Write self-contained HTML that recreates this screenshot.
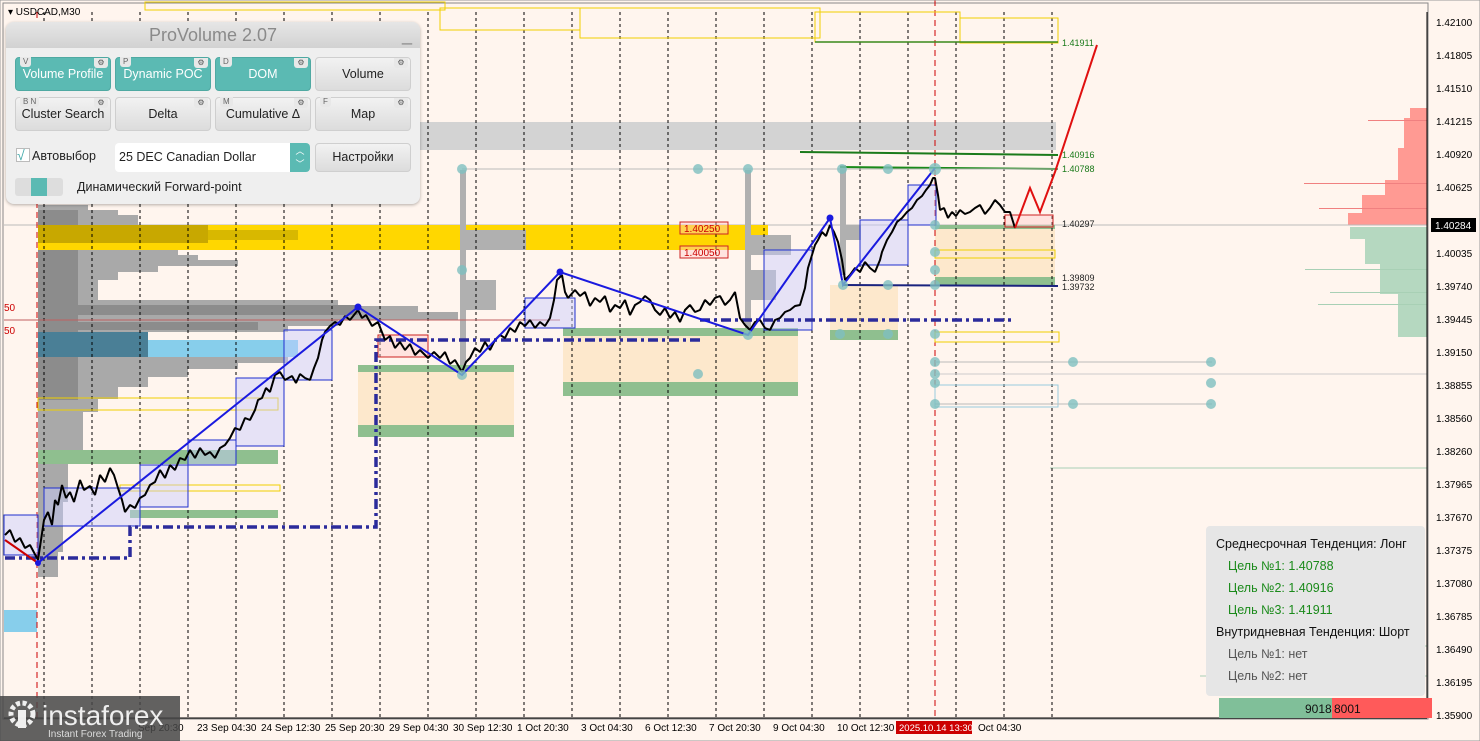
<!DOCTYPE html>
<html><head><meta charset="utf-8"><style>
*{margin:0;padding:0;box-sizing:border-box}
body{width:1480px;height:741px;overflow:hidden;background:#fff5ee;font-family:"Liberation Sans",sans-serif;position:relative}
svg{position:absolute;left:0;top:0}
.ax{font-size:10px;fill:#000}
.panel{position:absolute;left:6px;top:22px;width:414px;height:182px;background:#efefef;border-radius:8px;box-shadow:0 1px 3px rgba(0,0,0,.3)}
.ptitle{height:26px;border-radius:8px 8px 0 0;background:linear-gradient(#e6e6e6,#d2d2d2);text-align:center;color:#8a8a8a;font-size:18px;line-height:26px}
.btn{position:absolute;width:96px;height:34px;border-radius:4px;background:linear-gradient(#f2f2f2,#dcdcdc);border:1px solid #cfcfcf;font-size:12.5px;text-align:center;line-height:32px;color:#222}
.btn.on{background:#5bbab3;color:#fff;border-color:#4fa9a2}
.btn small{position:absolute;top:-1px;left:4px;font-size:8px;line-height:10px;color:#666;background:#e8e8e8;padding:0 3px;border-radius:0 0 3px 3px}
.btn i{position:absolute;top:0;right:2px;width:14px;height:10px;background:#e8e8e8;border-radius:0 0 3px 3px;font-size:8px;line-height:10px;font-style:normal;color:#555}
.info{position:absolute;left:1206px;top:526px;width:219px;height:170px;background:#e6e6e6;border-radius:4px;font-size:12.5px;color:#111}
.info div{position:absolute;left:10px}
.g{color:#1a8a1a}
.gr{color:#555}
</style></head><body>
<svg width="1480" height="741" viewBox="0 0 1480 741">
<rect x="0" y="0" width="1480" height="741" fill="#fff5ee"/>
<rect x="3" y="3" width="1425" height="716" fill="none" stroke="#888" stroke-width="1"/>
<!-- right profile -->
<g fill="#ff9a93">
<rect x="1410" y="108" width="17" height="10"/><rect x="1404" y="118" width="23" height="30"/><rect x="1398" y="148" width="29" height="32"/><rect x="1385" y="180" width="42" height="15"/><rect x="1362" y="195" width="65" height="18"/><rect x="1348" y="213" width="79" height="12"/>
</g>
<g fill="#f08080"><rect x="1368" y="120" width="59" height="1"/><rect x="1304" y="183" width="123" height="1"/><rect x="1319" y="208" width="108" height="1"/></g>
<g fill="#b5d8c0">
<rect x="1350" y="227" width="77" height="12"/><rect x="1365" y="239" width="62" height="25"/><rect x="1380" y="264" width="47" height="30"/><rect x="1398" y="294" width="29" height="43"/>
</g>
<g fill="#a8d0b5"><rect x="1305" y="269" width="122" height="1"/><rect x="1330" y="292" width="97" height="1"/><rect x="1318" y="304" width="109" height="1"/></g>
<line x1="4" y1="225" x2="1427" y2="225" stroke="#bbb"/>
<line x1="1050" y1="468" x2="1427" y2="468" stroke="#a8d0b5"/><line x1="1280" y1="646" x2="1427" y2="646" stroke="#a8d0b5"/><line x1="1200" y1="676" x2="1427" y2="676" stroke="#a8d0b5"/>
<!-- top gray band -->
<rect x="420" y="122" width="636" height="28" fill="#d3d3d3"/>
<!-- left volume profile -->
<g fill="#a9a9a9">
<rect x="38" y="205" width="50" height="5"/><rect x="38" y="210" width="80" height="5"/><rect x="38" y="215" width="100" height="10"/>
<rect x="38" y="250" width="140" height="5"/><rect x="38" y="255" width="160" height="5"/><rect x="38" y="260" width="200" height="6"/><rect x="38" y="266" width="120" height="6"/><rect x="38" y="272" width="80" height="8"/><rect x="38" y="280" width="60" height="20"/>
<rect x="38" y="300" width="300" height="6"/><rect x="38" y="306" width="380" height="6"/><rect x="38" y="312" width="420" height="8"/><rect x="38" y="320" width="300" height="6"/><rect x="38" y="326" width="250" height="6"/>
<rect x="38" y="357" width="250" height="6"/><rect x="38" y="363" width="200" height="6"/><rect x="38" y="369" width="150" height="8"/><rect x="38" y="377" width="110" height="10"/><rect x="38" y="387" width="80" height="12"/><rect x="38" y="399" width="60" height="13"/><rect x="38" y="412" width="45" height="40"/><rect x="38" y="452" width="30" height="50"/><rect x="38" y="502" width="25" height="50"/><rect x="38" y="552" width="20" height="25"/>
</g>
<g fill="#8c8c8c"><rect x="38" y="305" width="320" height="10"/><rect x="38" y="322" width="220" height="8"/><rect x="38" y="210" width="40" height="190"/></g>
<rect x="38" y="225" width="730" height="25" fill="#ffd700"/>
<rect x="38" y="225" width="170" height="18" fill="#c8a800"/>
<rect x="208" y="230" width="90" height="10" fill="#d8b800"/>
<rect x="38" y="332" width="110" height="25" fill="#4a7f96"/>
<rect x="148" y="340" width="150" height="17" fill="#87ceeb"/>
<rect x="4" y="610" width="33" height="22" fill="#87ceeb"/>
<!-- small profiles -->
<g fill="#b0b0b0"><rect x="460" y="170" width="6" height="200"/><rect x="466" y="230" width="60" height="20"/><rect x="466" y="280" width="30" height="30"/><rect x="745" y="170" width="6" height="160"/><rect x="751" y="235" width="40" height="20"/><rect x="751" y="270" width="25" height="30"/><rect x="840" y="165" width="6" height="110"/><rect x="846" y="225" width="15" height="15"/></g>
<!-- zones -->
<rect x="358" y="368" width="156" height="68" fill="#fde8cc"/><rect x="358" y="365" width="156" height="7" fill="#8fbf8f"/><rect x="358" y="425" width="156" height="12" fill="#8fbf8f"/>
<rect x="563" y="335" width="235" height="60" fill="#fde8cc"/><rect x="563" y="328" width="235" height="8" fill="#8fbf8f"/><rect x="563" y="382" width="235" height="14" fill="#8fbf8f"/>
<rect x="830" y="285" width="68" height="55" fill="#fde8cc"/><rect x="830" y="330" width="68" height="10" fill="#8fbf8f"/>
<rect x="935" y="228" width="120" height="52" fill="#fde8cc"/><rect x="935" y="225" width="120" height="4" fill="#8fbf8f"/><rect x="935" y="277" width="120" height="8" fill="#8fbf8f"/>
<rect x="38" y="450" width="240" height="14" fill="#8fbf8f"/><rect x="130" y="510" width="148" height="8" fill="#8fbf8f"/>
<!-- vertical dotted lines -->
<g stroke="#000" stroke-dasharray="3,3" stroke-width="1">
<line x1="44" y1="12" x2="44" y2="718"/><line x1="92" y1="12" x2="92" y2="718"/><line x1="140" y1="12" x2="140" y2="718"/><line x1="188" y1="12" x2="188" y2="718"/><line x1="236" y1="12" x2="236" y2="718"/><line x1="284" y1="12" x2="284" y2="718"/><line x1="332" y1="12" x2="332" y2="718"/><line x1="380" y1="12" x2="380" y2="718"/><line x1="428" y1="12" x2="428" y2="718"/><line x1="476" y1="12" x2="476" y2="718"/><line x1="524" y1="12" x2="524" y2="718"/><line x1="572" y1="12" x2="572" y2="718"/><line x1="620" y1="12" x2="620" y2="718"/><line x1="668" y1="12" x2="668" y2="718"/><line x1="716" y1="12" x2="716" y2="718"/><line x1="764" y1="12" x2="764" y2="718"/><line x1="812" y1="12" x2="812" y2="718"/><line x1="860" y1="12" x2="860" y2="718"/><line x1="908" y1="12" x2="908" y2="718"/><line x1="956" y1="12" x2="956" y2="718"/><line x1="1004" y1="12" x2="1004" y2="718"/><line x1="1052" y1="12" x2="1052" y2="718"/>
</g>
<line x1="37" y1="12" x2="37" y2="718" stroke="#c00" stroke-dasharray="6,4"/>
<line x1="935" y1="0" x2="935" y2="718" stroke="#c00" stroke-dasharray="6,4"/>
<!-- yellow boxes top -->
<g fill="none" stroke="#f0d000"><rect x="145" y="2" width="300" height="8"/><rect x="440" y="8" width="140" height="22"/><rect x="580" y="8" width="240" height="30"/><rect x="815" y="12" width="145" height="30"/><rect x="960" y="18" width="98" height="25"/><rect x="38" y="398" width="240" height="12"/><rect x="120" y="485" width="160" height="6"/><rect x="935" y="250" width="120" height="8"/><rect x="935" y="332" width="124" height="10"/></g>
<g fill="none" stroke="#99ccdd"><rect x="935" y="385" width="123" height="22"/></g>
<line x1="935" y1="362" x2="1212" y2="362" stroke="#bbb"/><line x1="935" y1="374" x2="1427" y2="374" stroke="#ccc"/><line x1="935" y1="404" x2="1212" y2="404" stroke="#bbb"/>
<!-- target lines -->
<line x1="815" y1="42" x2="1058" y2="42" stroke="#3a8a1a" stroke-width="1.5"/>
<line x1="800" y1="152" x2="1058" y2="155" stroke="#1a7a1a" stroke-width="2"/>
<line x1="840" y1="167" x2="1058" y2="169" stroke="#1a8a1a" stroke-width="2"/>
<line x1="843" y1="285" x2="1058" y2="286" stroke="#1a237e" stroke-width="2"/>
<line x1="462" y1="169" x2="1058" y2="169" stroke="#bbb"/>
<line x1="4" y1="320" x2="560" y2="320" stroke="#c06060"/>
<!-- blue boxes -->
<g fill="rgba(200,205,255,.45)" stroke="#1f2fcf" stroke-width="1">
<rect x="44" y="488" width="96" height="38"/><rect x="140" y="465" width="48" height="42"/><rect x="188" y="440" width="48" height="25"/><rect x="236" y="378" width="48" height="68"/><rect x="284" y="330" width="48" height="50"/><rect x="525" y="298" width="50" height="30"/><rect x="764" y="250" width="48" height="80"/><rect x="860" y="220" width="48" height="45"/><rect x="908" y="185" width="28" height="40"/><rect x="4" y="515" width="34" height="40"/>
</g>
<g fill="rgba(255,200,200,.4)" stroke="#c22"><rect x="378" y="335" width="50" height="22"/><rect x="680" y="222" width="48" height="12"/><rect x="680" y="246" width="48" height="12"/><rect x="1005" y="215" width="48" height="12"/></g>
<g font-size="10" fill="#c00"><text x="684" y="232">1.40250</text><text x="684" y="256">1.40050</text><text x="4" y="311">50</text><text x="4" y="334">50</text></g>
<!-- dash-dot -->
<polyline points="5,558 130,558 130,527 376,527 376,340 700,340" fill="none" stroke="#2b2b9b" stroke-width="3.5" stroke-dasharray="10,4,3,4"/>
<polyline points="700,320 1015,320" fill="none" stroke="#2b2b9b" stroke-width="3.5" stroke-dasharray="10,4,3,4"/>
<!-- price -->
<polyline fill="none" stroke="#000" stroke-width="2" stroke-linejoin="bevel" points="5,535 10,530 15,542 20,538 25,548 30,545 38,560 41,540 44,520 48,512 52,525 55,500 58,505 62,485 66,498 70,492 74,502 80,480 84,490 90,486 95,495 100,475 105,482 110,468 114,475 118,488 122,500 125,512 130,505 135,508 140,498 145,495 150,485 155,482 160,470 165,478 170,465 175,470 180,458 185,460 190,450 195,458 200,448 205,455 210,452 215,458 220,448 225,445 230,438 235,428 240,430 245,418 250,420 255,410 258,400 262,398 266,388 270,392 275,375 280,372 285,380 292,376 296,383 300,374 305,378 310,380 314,368 318,358 322,340 325,332 330,326 335,322 340,325 345,316 350,320 358,310 362,318 366,315 372,326 378,322 385,340 390,336 395,348 400,342 405,350 410,344 415,355 420,350 428,358 434,352 440,358 445,352 450,364 455,360 462,372 466,362 470,358 475,348 480,352 485,342 490,350 495,340 500,335 505,338 510,328 515,332 520,322 525,326 530,320 535,328 540,322 545,326 550,318 554,300 557,280 562,275 565,292 568,298 575,290 580,296 585,292 590,306 595,298 600,302 605,296 610,312 615,305 620,308 625,300 630,315 635,305 640,302 645,296 650,300 655,310 660,315 665,308 670,318 675,312 680,322 685,310 690,305 695,312 700,310 705,300 710,305 715,298 720,296 725,305 730,300 735,292 740,318 745,325 750,330 755,322 760,320 765,328 770,330 775,320 780,318 785,312 790,310 795,306 800,305 805,288 808,268 812,255 815,245 818,240 822,232 826,236 830,225 834,232 838,242 842,260 845,280 850,275 855,268 860,272 865,262 870,268 875,272 880,260 882,252 887,240 892,232 897,222 902,218 907,212 912,208 917,200 922,196 926,190 930,185 933,178 935,178 938,195 940,210 944,208 948,218 952,212 956,216 960,210 965,214 970,212 975,208 980,205 985,214 990,208 995,200 1000,205 1005,212 1010,212 1015,228"/>
<polyline points="1015,228 1030,188 1040,212 1055,172 1097,45" fill="none" stroke="#e01010" stroke-width="2"/>
<line x1="5" y1="540" x2="38" y2="563" stroke="#c00" stroke-width="2"/>
<!-- zigzag -->
<polyline points="38,563 358,307 462,375 560,272 748,335 830,218 843,285 935,168" fill="none" stroke="#1a1adf" stroke-width="2"/>
<g fill="#1a1adf"><circle cx="358" cy="307" r="3.5"/><circle cx="560" cy="272" r="3.5"/><circle cx="830" cy="218" r="3.5"/><circle cx="38" cy="563" r="3"/></g>
<!-- teal circles -->
<g fill="#7fc0c0" opacity=".8">
<circle cx="462" cy="169" r="5"/><circle cx="698" cy="169" r="5"/><circle cx="748" cy="169" r="5"/><circle cx="842" cy="169" r="5"/><circle cx="888" cy="169" r="5"/><circle cx="935" cy="169" r="6"/>
<circle cx="462" cy="270" r="5"/><circle cx="462" cy="375" r="5"/><circle cx="748" cy="335" r="5"/><circle cx="698" cy="374" r="5"/><circle cx="843" cy="285" r="5"/><circle cx="888" cy="285" r="5"/><circle cx="935" cy="225" r="5"/><circle cx="935" cy="252" r="5"/><circle cx="935" cy="270" r="5"/><circle cx="935" cy="285" r="5"/><circle cx="840" cy="334" r="5"/><circle cx="888" cy="334" r="5"/><circle cx="935" cy="334" r="5"/><circle cx="935" cy="362" r="5"/><circle cx="935" cy="374" r="5"/><circle cx="935" cy="383" r="5"/><circle cx="935" cy="404" r="5"/><circle cx="1073" cy="362" r="5"/><circle cx="1073" cy="404" r="5"/><circle cx="1211" cy="362" r="5"/><circle cx="1211" cy="383" r="5"/><circle cx="1211" cy="404" r="5"/>
</g>
<g font-size="9" fill="#1a7a1a"><text x="1062" y="46">1.41911</text><text x="1062" y="158">1.40916</text><text x="1062" y="172">1.40788</text></g>
<g font-size="9" fill="#222"><text x="1062" y="227">1.40297</text><text x="1062" y="281">1.39809</text><text x="1062" y="290">1.39732</text></g>
<!-- axis -->
<line x1="1427" y1="12" x2="1427" y2="718" stroke="#000"/>
<line x1="4" y1="718" x2="1427" y2="718" stroke="#000"/>
<g class="ax">
<text x="1436" y="26">1.42100</text><text x="1436" y="59">1.41805</text><text x="1436" y="92">1.41510</text><text x="1436" y="125">1.41215</text><text x="1436" y="158">1.40920</text><text x="1436" y="191">1.40625</text><text x="1436" y="257">1.40035</text><text x="1436" y="290">1.39740</text><text x="1436" y="323">1.39445</text><text x="1436" y="356">1.39150</text><text x="1436" y="389">1.38855</text><text x="1436" y="422">1.38560</text><text x="1436" y="455">1.38260</text><text x="1436" y="488">1.37965</text><text x="1436" y="521">1.37670</text><text x="1436" y="554">1.37375</text><text x="1436" y="587">1.37080</text><text x="1436" y="620">1.36785</text><text x="1436" y="653">1.36490</text><text x="1436" y="686">1.36195</text><text x="1436" y="719">1.35900</text>
</g>
<rect x="1431" y="218" width="45" height="14" fill="#000"/><text x="1435" y="229" font-size="10" fill="#fff">1.40284</text>
<g class="ax">
<text x="197" y="731">23 Sep 04:30</text><text x="261" y="731">24 Sep 12:30</text><text x="325" y="731">25 Sep 20:30</text><text x="389" y="731">29 Sep 04:30</text><text x="453" y="731">30 Sep 12:30</text><text x="517" y="731">1 Oct 20:30</text><text x="581" y="731">3 Oct 04:30</text><text x="645" y="731">6 Oct 12:30</text><text x="709" y="731">7 Oct 20:30</text><text x="773" y="731">9 Oct 04:30</text><text x="837" y="731">10 Oct 12:30</text><text x="978" y="731">Oct 04:30</text><text x="138" y="731">Sep 20:30</text>
</g>
<rect x="896" y="721" width="76" height="13" fill="#c00"/><text x="899" y="731" font-size="9.5" fill="#fff">2025.10.14 13:30</text>
<rect x="0" y="0" width="1480" height="741" fill="none" stroke="#999"/>
<!-- right info bar -->
<rect x="1219" y="698" width="113" height="20" fill="#80bf99"/><rect x="1332" y="698" width="100" height="20" fill="#ff5a5a"/>
<text x="1305" y="713" font-size="12" fill="#111">9018</text><text x="1334" y="713" font-size="12" fill="#111">8001</text>
<!-- logo -->
<rect x="0" y="696" width="180" height="45" fill="rgba(70,70,70,.85)"/>
<g fill="#fff" opacity=".9"><circle cx="22" cy="714" r="11" fill="none" stroke="#fff" stroke-width="5" stroke-dasharray="4,2.5"/><rect x="18" y="710" width="8" height="18"/></g>
<text x="42" y="725" font-size="28" fill="#eee">instaforex</text>
<text x="48" y="737" font-size="10" fill="#ddd">Instant Forex Trading</text>
<!-- symbol -->
<text x="8" y="15" font-size="10">▾ USDCAD,M30</text>
</svg>
<div class="panel">
<div class="ptitle">ProVolume 2.07<span style="position:absolute;right:8px;top:0;color:#888">_</span></div>
<div class="btn on" style="left:9px;top:35px"><small>V</small><i>⚙</i>Volume Profile</div>
<div class="btn on" style="left:109px;top:35px"><small>P</small><i>⚙</i>Dynamic POC</div>
<div class="btn on" style="left:209px;top:35px"><small>D</small><i>⚙</i>DOM</div>
<div class="btn" style="left:309px;top:35px"><i>⚙</i>Volume</div>
<div class="btn" style="left:9px;top:75px"><small>B N</small><i>⚙</i>Cluster Search</div>
<div class="btn" style="left:109px;top:75px"><i>⚙</i>Delta</div>
<div class="btn" style="left:209px;top:75px"><small>M</small><i>⚙</i>Cumulative Δ</div>
<div class="btn" style="left:309px;top:75px"><small>F</small><i>⚙</i>Map</div>
<div style="position:absolute;left:10px;top:126px;width:14px;height:14px;background:#fff;border:1px solid #bbb;color:#4aa;font-size:14px;line-height:12px">√</div>
<div style="position:absolute;left:26px;top:127px;font-size:12.5px;color:#222">Автовыбор</div>
<div style="position:absolute;left:109px;top:121px;width:195px;height:29px;background:#fff;border-radius:4px;font-size:12.5px;line-height:29px;padding-left:4px;color:#222">25 DEC Canadian Dollar<div style="position:absolute;right:0;top:0;width:20px;height:29px;background:#5bbab3;border-radius:0 4px 4px 0;color:#fff;font-size:9px;line-height:13px;text-align:center;padding-top:2px">︿<br>﹀</div></div>
<div class="btn" style="left:309px;top:121px;height:29px;line-height:27px">Настройки</div>
<div style="position:absolute;left:9px;top:156px;width:48px;height:18px;background:#ddd;border-radius:3px"><div style="position:absolute;left:16px;top:0;width:16px;height:18px;background:#5bbab3"></div></div>
<div style="position:absolute;left:71px;top:158px;font-size:12.5px;color:#222">Динамический Forward-point</div>
</div>
<div class="info">
<div style="top:11px">Среднесрочная Тенденция: Лонг</div>
<div class="g" style="top:33px;left:22px">Цель №1: 1.40788</div>
<div class="g" style="top:55px;left:22px">Цель №2: 1.40916</div>
<div class="g" style="top:77px;left:22px">Цель №3: 1.41911</div>
<div style="top:99px">Внутридневная Тенденция: Шорт</div>
<div class="gr" style="top:121px;left:22px">Цель №1: нет</div>
<div class="gr" style="top:143px;left:22px">Цель №2: нет</div>
</div>
</body></html>
